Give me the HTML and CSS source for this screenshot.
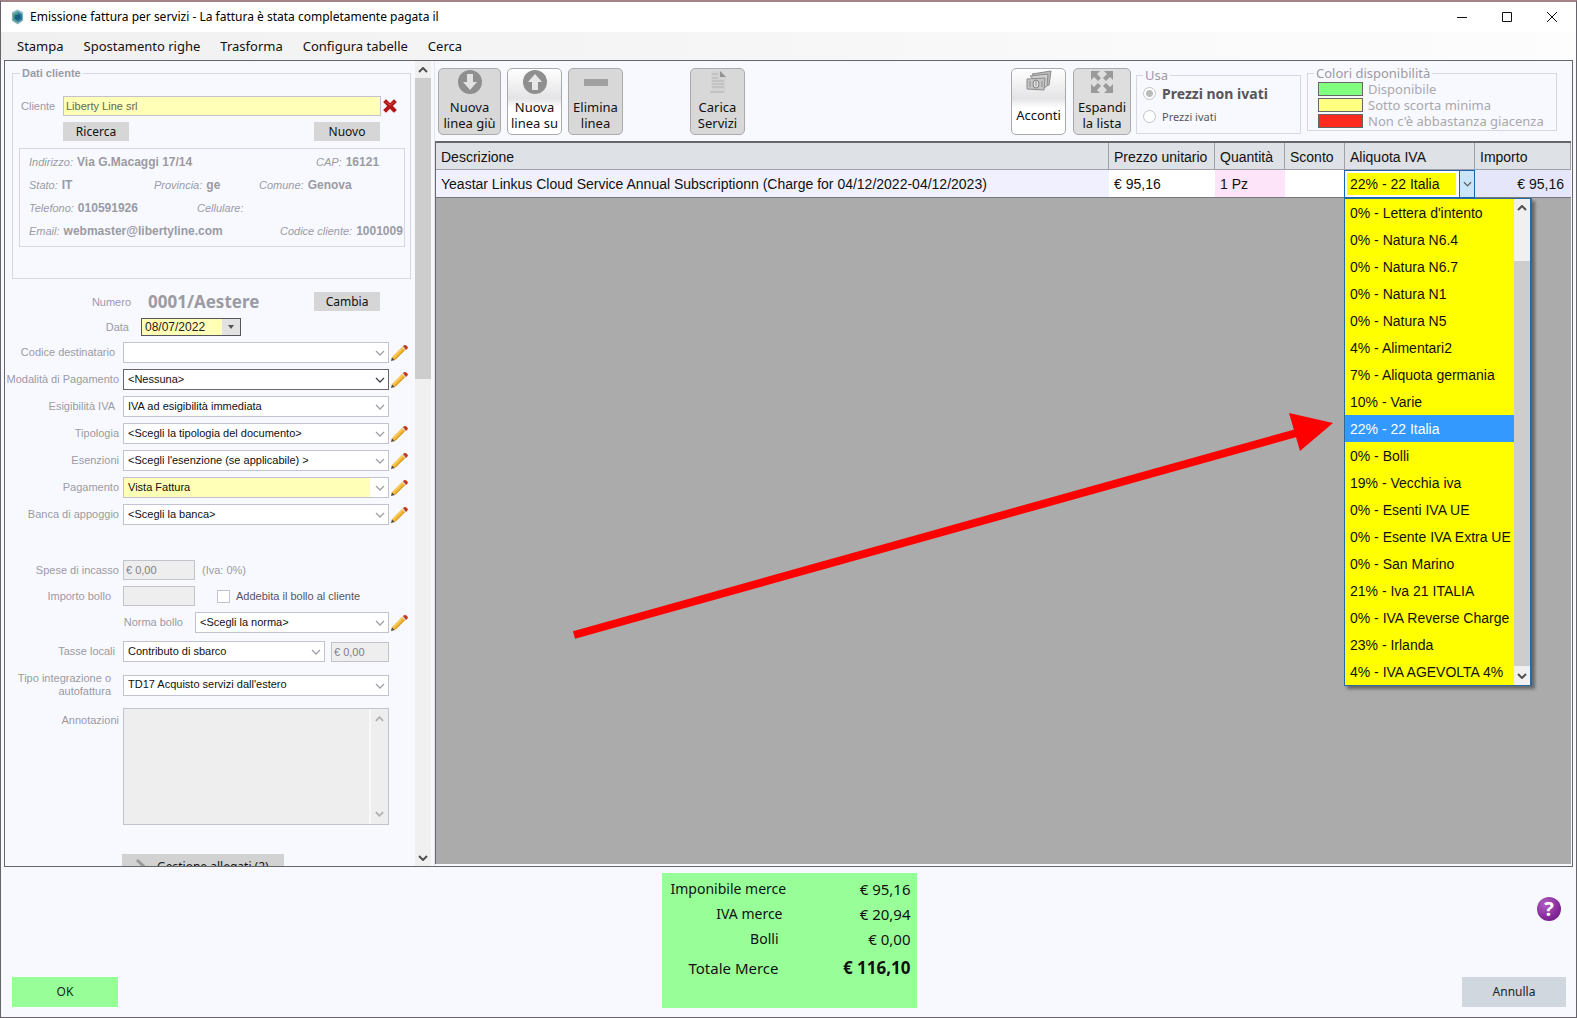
FILE: index.html
```html
<!DOCTYPE html>
<html lang="it">
<head>
<meta charset="utf-8">
<title>Emissione fattura per servizi</title>
<link rel="stylesheet" href="styles.css">
</head>
<body>
<svg class="defs" aria-hidden="true">
  <symbol id="pencil" viewBox="0 0 17 17">
    <path d="M0 17l1-4 3 3z" fill="#5a4a3a"/>
    <path d="M1 13L11 3l3 3L4 16z" fill="#f2b632"/>
    <path d="M2 13.500l10-10" stroke="#ffe07a" stroke-width="1"/>
    <path d="M4 15.500l10-10" stroke="#c98a1c" stroke-width="1"/>
    <path d="M11 3l1-1 3 3-1 1z" fill="#d9d2c8"/>
    <path d="M12 2q2-2 4 0t-1 4z" fill="#c03a1e"/>
  </symbol>
  <symbol id="up" viewBox="0 0 10 6"><path d="M1 5l4-4 4 4" fill="none" stroke="currentColor" stroke-width="2"/></symbol>
  <symbol id="down" viewBox="0 0 10 6"><path d="M1 1l4 4 4-4" fill="none" stroke="currentColor" stroke-width="2"/></symbol>
  <symbol id="chevron" viewBox="0 0 10 6"><path d="M1 1l4 4 4-4" fill="none" stroke="currentColor" stroke-width="1.300"/></symbol>
</svg>
<div class="window">
  <header class="titlebar">
    <svg class="app-icon" viewBox="0 0 16 16" aria-hidden="true"><path d="M8 0l6 3v9l-6 4-6-4V3z" fill="#8fb7c4"/><path d="M8 2l5 3v6l-5 3z" fill="#2f7f9a"/><path d="M8 2L3 5v6l5 3z" fill="#4a9a8a"/><path d="M5 6l5-1 2 4-4 3-3-2z" fill="#1c5f86"/></svg>
    <h1>Emissione fattura per servizi - La fattura è stata completamente pagata il</h1>
    <div class="controls">
      <button aria-label="Riduci"><svg viewBox="0 0 12 12"><path d="M1 6.500h10"/></svg></button>
      <button aria-label="Ingrandisci"><svg viewBox="0 0 12 12"><path d="M1.500 1.500h9v9h-9z"/></svg></button>
      <button aria-label="Chiudi"><svg viewBox="0 0 12 12"><path d="M1 1l10 10M11 1L1 11"/></svg></button>
    </div>
  </header>
  <nav class="menu">
    <a href="#">Stampa</a><a href="#">Spostamento righe</a><a href="#">Trasforma</a><a href="#">Configura tabelle</a><a href="#">Cerca</a>
  </nav>

  <main class="frame">
    <aside class="side">
      <form class="form">
        <fieldset class="customer">
          <legend>Dati cliente</legend>
          <div class="client-row">
            <label for="cliente">Cliente</label>
            <input id="cliente" class="box yellow" value="Liberty Line srl">
            <button type="button" class="clear" aria-label="Rimuovi cliente"><svg viewBox="0 0 14 14"><path d="M3 3l8 8M11 3l-8 8" stroke="#b01818" stroke-width="4" stroke-linecap="square"/><path d="M3 3l4 3 4-3" stroke="#e04848" stroke-width="1" fill="none"/></svg></button>
          </div>
          <div class="client-buttons"><button type="button" class="small">Ricerca</button><button type="button" class="small">Nuovo</button></div>
          <div class="details">
            <div class="d1"><span><i>Indirizzo:</i><b>Via G.Macaggi 17/14</b></span><span><i>CAP:</i><b>16121</b></span></div>
            <div class="d2"><span><i>Stato:</i><b>IT</b></span><span><i>Provincia:</i><b>ge</b></span><span><i>Comune:</i><b>Genova</b></span></div>
            <div class="d3"><span><i>Telefono:</i><b>010591926</b></span><span><i>Cellulare:</i></span></div>
            <div class="d4"><span><i>Email:</i><b>webmaster@libertyline.com</b></span><span><i>Codice cliente:</i><b>1001009</b></span></div>
          </div>
        </fieldset>

        <div class="number-row"><span class="caption">Numero</span><strong>0001/Aestere</strong><button type="button" class="small">Cambia</button></div>
        <div class="date-row"><label class="caption" for="data">Data</label><div class="date"><input id="data" value="08/07/2022"><button type="button" aria-label="Apri calendario"><svg viewBox="0 0 6 4"><path d="M0 0h6L3 4z"/></svg></button></div></div>

        <div class="rows">
          <div class="row"><label class="in" for="f1">Codice destinatario</label><div class="combo"><select id="f1"><option></option></select><svg><use href="#chevron"/></svg></div><button type="button" class="edit" aria-label="Modifica"><svg><use href="#pencil"/></svg></button></div>
          <div class="row"><label for="f2">Modalità di Pagamento</label><div class="combo active"><select id="f2"><option>&lt;Nessuna&gt;</option></select><svg><use href="#chevron"/></svg></div><button type="button" class="edit" aria-label="Modifica"><svg><use href="#pencil"/></svg></button></div>
          <div class="row"><label class="in" for="f3">Esigibilità IVA</label><div class="combo"><select id="f3"><option>IVA ad esigibilità immediata</option></select><svg><use href="#chevron"/></svg></div></div>
          <div class="row"><label for="f4">Tipologia</label><div class="combo"><select id="f4"><option>&lt;Scegli la tipologia del documento&gt;</option></select><svg><use href="#chevron"/></svg></div><button type="button" class="edit" aria-label="Modifica"><svg><use href="#pencil"/></svg></button></div>
          <div class="row"><label for="f5">Esenzioni</label><div class="combo"><select id="f5"><option>&lt;Scegli l'esenzione (se applicabile) &gt;</option></select><svg><use href="#chevron"/></svg></div><button type="button" class="edit" aria-label="Modifica"><svg><use href="#pencil"/></svg></button></div>
          <div class="row"><label for="f6">Pagamento</label><div class="combo fill"><select id="f6"><option>Vista Fattura</option></select><svg><use href="#chevron"/></svg></div><button type="button" class="edit" aria-label="Modifica"><svg><use href="#pencil"/></svg></button></div>
          <div class="row"><label for="f7">Banca di appoggio</label><div class="combo"><select id="f7"><option>&lt;Scegli la banca&gt;</option></select><svg><use href="#chevron"/></svg></div><button type="button" class="edit" aria-label="Modifica"><svg><use href="#pencil"/></svg></button></div>
        </div>

        <div class="rows extra">
          <div class="row"><label for="f8">Spese di incasso</label><div class="pair"><input id="f8" class="box money" value="€ 0,00" readonly><span class="caption">(Iva: 0%)</span></div></div>
          <div class="row"><label class="in2" for="f9">Importo bollo</label><div class="pair"><input id="f9" class="box money" readonly><label class="tick"><input type="checkbox"><span>Addebita il bollo al cliente</span></label></div></div>
          <div class="row norm"><label class="in2" for="f10">Norma bollo</label><div class="combo"><select id="f10"><option>&lt;Scegli la norma&gt;</option></select><svg><use href="#chevron"/></svg></div><button type="button" class="edit" aria-label="Modifica"><svg><use href="#pencil"/></svg></button></div>
        </div>
        <div class="rows last">
          <div class="row"><label class="in" for="f11">Tasse locali</label><div class="pair tax"><div class="combo"><select id="f11"><option>Contributo di sbarco</option></select><svg><use href="#chevron"/></svg></div><input class="box" value="€ 0,00" readonly aria-label="Importo tasse locali"></div></div>
          <div class="row"><label class="in2" for="f12">Tipo integrazione o autofattura</label><div class="combo"><select id="f12"><option>TD17 Acquisto servizi dall'estero</option></select><svg><use href="#chevron"/></svg></div></div>
          <div class="row notes"><label for="f13">Annotazioni</label><div class="notes-box"><textarea id="f13" readonly></textarea><div class="notes-scroll"><svg><use href="#up"/></svg><svg><use href="#down"/></svg></div></div></div>
        </div>
        <button type="button" class="attach"><svg viewBox="0 0 18 18"><path d="M1 2l15 14" stroke="#999" stroke-width="3"/></svg>Gestione allegati (2)</button>
      </form>
      <div class="scroll"><svg><use href="#up"/></svg><div class="thumb"></div><svg><use href="#down"/></svg></div>
    </aside>

    <section class="work">
      <div class="toolbar">
        <button class="tool wide"><svg viewBox="0 0 26 26"><circle cx="13" cy="13" r="12" fill="#8f8f8f"/><path d="M10 5h6v8h4l-7 8-7-8h4z" fill="#e2e2e2"/></svg><span>Nuova<br>linea giù</span></button>
        <button class="tool light"><svg viewBox="0 0 26 26"><circle cx="13" cy="13" r="12" fill="#8f8f8f"/><path d="M10 21h6v-8h4l-7-8-7 8h4z" fill="#e8e8e8"/></svg><span>Nuova<br>linea su</span></button>
        <button class="tool"><svg viewBox="0 0 26 26"><path d="M1 10h24v7H1z" fill="#a0a0a0"/></svg><span>Elimina<br>linea</span></button>
        <button class="tool load"><svg viewBox="0 0 26 26"><path d="M6 2h10l5 5v17H6z" fill="#d3d3d3"/><path d="M15 2l6 6h-6z" fill="#929292"/><path d="M7 5h6M7 9h6M7 12h12M7 15h12M7 18h12M5 23h14" stroke="#b2b2b2"/></svg><span>Carica<br>Servizi</span></button>
        <button class="tool light credit"><svg viewBox="0 0 26 26"><path d="M6 5l19-3-2 14-4 1z" fill="#bbb" stroke="#8c8c8c"/><path d="M4 7l18-2-1 12-3 2z" fill="#d0d0d0" stroke="#8c8c8c"/><path d="M1 10l18-1-1 12-17-1z" fill="#c4c4c4" stroke="#8c8c8c"/><ellipse cx="10" cy="15" rx="3" ry="4" fill="#e4e4e4" stroke="#808080"/><path d="M4 12v6M16 12v6M10 12v5" stroke="#8c8c8c"/></svg><span>Acconti</span></button>
        <button class="tool expand"><svg viewBox="0 0 26 26" fill="#9a9a9a"><path id="corner" d="M2 2h9L8 5l4 4-3 3-4-4-3 3z"/><use href="#corner" transform="rotate(90 13 13)"/><use href="#corner" transform="rotate(180 13 13)"/><use href="#corner" transform="rotate(270 13 13)"/></svg><span>Espandi<br>la lista</span></button>
        <fieldset class="usage"><legend>Usa</legend>
          <label class="main"><input type="radio" name="usa" checked><span>Prezzi non ivati</span></label>
          <label><input type="radio" name="usa"><span>Prezzi ivati</span></label>
        </fieldset>
        <fieldset class="stock"><legend>Colori disponibilità</legend>
          <div><i class="green"></i>Disponibile</div><div><i class="pale"></i>Sotto scorta minima</div><div><i class="red"></i>Non c'è abbastanza giacenza</div>
        </fieldset>
      </div>
      <div class="grid">
        <table>
          <colgroup><col><col class="c2"><col class="c3"><col class="c4"><col class="c5"><col class="c6"></colgroup>
          <thead><tr><th>Descrizione</th><th>Prezzo unitario</th><th>Quantità</th><th>Sconto</th><th>Aliquota IVA</th><th>Importo</th></tr></thead>
          <tbody><tr><td class="lilac">Yeastar Linkus Cloud Service Annual Subscriptionn (Charge for 04/12/2022-04/12/2023)</td><td>€ 95,16</td><td class="pink">1 Pz</td><td></td>
            <td class="vat"><div class="vat-combo"><select aria-label="Aliquota IVA"><option>22% - 22 Italia</option></select><span><svg><use href="#chevron"/></svg></span></div>
              <div class="popup"><ul role="listbox" aria-label="Aliquote"><li role="option">0% - Lettera d'intento</li><li role="option">0% - Natura N6.4</li><li role="option">0% - Natura N6.7</li><li role="option">0% - Natura N1</li><li role="option">0% - Natura N5</li><li role="option">4% - Alimentari2</li><li role="option">7% - Aliquota germania</li><li role="option">10% - Varie</li><li role="option" aria-selected="true" class="sel">22% - 22 Italia</li><li role="option">0% - Bolli</li><li role="option">19% - Vecchia iva</li><li role="option">0% - Esenti IVA UE</li><li role="option">0% - Esente IVA Extra UE</li><li role="option">0% - San Marino</li><li role="option">21% - Iva 21 ITALIA</li><li role="option">0% - IVA Reverse Charge</li><li role="option">23% - Irlanda</li><li role="option">4% - IVA AGEVOLTA 4%</li></ul>
              <div class="scroll"><svg><use href="#up"/></svg><div class="thumb"></div><svg><use href="#down"/></svg></div></div>
            </td><td class="amount">€ 95,16</td></tr></tbody>
        </table>
        <svg class="arrow" viewBox="0 0 770 240" aria-hidden="true"><path d="M4 222L730 19" stroke="#f00" stroke-width="8"/><path d="M719 0l44 10-33 28z" fill="#f00"/></svg>
      </div>
    </section>
  </main>

  <footer class="footer">
    <button class="ok">OK</button>
    <dl class="totals"><div><dt>Imponibile merce</dt><dd>€ 95,16</dd></div><div><dt>IVA merce</dt><dd>€ 20,94</dd></div><div><dt class="in">Bolli</dt><dd>€ 0,00</dd></div><div class="sum"><dt class="in">Totale Merce</dt><dd>€ 116,10</dd></div></dl>
    <div class="end"><button class="help" aria-label="Aiuto">?</button><button class="cancel">Annulla</button></div>
  </footer>
</div>
</body>
</html>
```
FILE: styles.css
```css
* { box-sizing: border-box; }
body { margin: 0; font: 11px/14px "Liberation Sans", Arial, sans-serif; color: #111; }
button, input, select, textarea { font: inherit; color: inherit; margin: 0; padding: 0; border: 0; background: none; border-radius: 0; outline: 0; }
h1, dl, dd, ul { margin: 0; padding: 0; }
fieldset { margin: 0; padding: 0; min-width: 0; border: 1px solid #d5d8e4; }
svg { display: block; }
.defs { position: absolute; width: 0; height: 0; }

.window { display: flex; flex-direction: column; height: 100vh; min-height: 900px; background: #f8f9ff; border: 1px solid #66636b; border-top: 2px solid #a28488; }
.titlebar { display: flex; align-items: center; height: 30px; padding: 0 2px 0 9px; background: #fff; flex: none; }
.app-icon { width: 15px; height: 16px; margin-right: 5px; }
h1 { font: 12px/16px "Noto Sans", "Open Sans", sans-serif; color: #000; }
.controls { display: flex; margin-left: auto; }
.controls button { width: 45px; height: 28px; display: grid; place-items: center; }
.controls svg { width: 12px; height: 12px; fill: none; stroke: #111; }
.menu { display: flex; align-items: center; gap: 20px; height: 28px; flex: none; padding-left: 16px; background: linear-gradient(90deg, #f0f0f0, #fdfdfd); font: 13px/18px "Noto Sans", sans-serif; }
.menu a { color: #111; text-decoration: none; }

.frame { display: flex; flex: 1; min-height: 0; margin: 0 3px; border: 1px solid #66666e; }
.side { display: flex; width: 429px; flex: none; overflow: hidden; }
.form { width: 410px; color: #9b9ba3; overflow: hidden; }
.scroll { display: flex; flex-direction: column; align-items: center; width: 16px; background: #f0f0f0; color: #505050; }
.side .scroll { padding: 6px 0 5px; }
.scroll svg { width: 10px; height: 6px; flex: none; }
.side .thumb { width: 16px; height: 301px; margin: 5px 0 auto; background: #cdcdcd; }

.customer { width: 399px; height: 212px; margin: 6px 0 0 7px; padding: 0 0 0 6px; }
legend { margin-left: 1px; padding: 0 2px; font-weight: bold; line-height: 13px; }
.box { height: 20px; padding: 0 2px; border: 1px solid #c3c3cc; background: #eee; color: #808088; }
.yellow { background: #ffffb8; color: #66665a; }
.client-row { display: grid; grid-template-columns: 42px 318px 20px; align-items: center; margin: 16px 0 6px 2px; }
.clear { width: 14px; height: 14px; margin-left: 2px; }
.small { width: 66px; height: 19px; background: #d6d6d6; color: #111; font: 12px/16px "Noto Sans", sans-serif; }
.client-buttons { display: flex; justify-content: space-between; width: 317px; margin-left: 44px; }
.details { width: 386px; height: 99px; margin-top: 7px; padding: 6px 0 0 9px; border: 1px solid #d5d8e4; overflow: hidden; white-space: nowrap; }
.details > div { display: grid; height: 23px; }
.details span { display: flex; gap: 4px; }
.details b { font-size: 12px; }
.d1 { grid-template-columns: 287px 1fr; }
.d2 { grid-template-columns: 125px 105px 1fr; }
.d3 { grid-template-columns: 168px 1fr; }
.d4 { grid-template-columns: 251px 1fr; }

.caption { color: #9b9ba3; }
.number-row { display: grid; grid-template-columns: 126px 165px 18px 66px; align-items: center; margin-top: 10px; height: 25px; }
.number-row strong { padding-left: 17px; font: bold 17px/22px "Noto Sans", sans-serif; }
.number-row .small { grid-column: 4; }
.number-row .caption, .date-row .caption { text-align: right; }
.date-row { display: grid; grid-template-columns: 124px 100px; column-gap: 12px; align-items: center; height: 18px; margin-top: 4px; }
.date { display: flex; height: 18px; border: 1px solid #55555c; background: #ffffb8; color: #222; font-size: 12px; }
.date input { flex: 1; min-width: 0; padding-left: 3px; }
.date button { width: 18px; display: grid; place-items: center; background: #e2e2e2; }
.date svg { width: 6px; height: 4px; fill: #555; }

.rows { display: flex; flex-direction: column; gap: 6px; margin-top: 6px; }
.row { display: grid; grid-template-columns: 116px 266px 20px; column-gap: 2px; align-items: center; min-height: 21px; }
.row > label { padding-right: 2px; text-align: right; line-height: 13px; }
.row > .in { padding-right: 6px; }
.row > .in2 { padding-right: 10px; }
.combo { position: relative; height: 21px; border: 1px solid #c3c3cf; background: #fff; }
.combo select { display: block; width: 100%; height: 17px; padding: 0 28px 0 4px; appearance: none; color: #111; opacity: 1; }
.combo svg { position: absolute; right: 3px; top: 7px; width: 10px; height: 6px; color: #a0a0a8; pointer-events: none; }
.combo.active { border-color: #66666e; }
.combo.active svg { color: #44444c; }
.combo.fill { background: linear-gradient(90deg, #ffffb8 246px, #fff 246px); }
.edit { width: 17px; height: 17px; }
.edit svg { width: 17px; height: 17px; }
.extra { margin-top: 35px; }
.extra .row { min-height: 20px; }
.pair { display: flex; align-items: center; gap: 7px; }
.money { width: 72px; }
.tick { display: flex; align-items: center; gap: 6px; margin-left: 15px; color: #55555c; }
.tick input { appearance: none; width: 13px; height: 13px; border: 1px solid #c3c3cf; background: #fff; }
.extra .norm { grid-template-columns: 188px 194px 20px; }
.last { margin-top: 8px; gap: 10px; }
.tax { gap: 6px; }
.tax .combo { width: 202px; }
.tax .box { width: 58px; }
.notes { align-items: start; }
.notes > label { padding-top: 6px; }
.notes-box { display: flex; height: 117px; border: 1px solid #c3c3cf; background: #eee; }
.notes textarea { flex: 1; min-width: 0; resize: none; }
.notes-scroll { display: flex; flex-direction: column; justify-content: space-between; align-items: center; width: 19px; padding: 7px 0; border-left: 2px solid #f8f8f8; color: #b0b0b0; }
.notes-scroll svg { width: 9px; height: 6px; }
.attach { display: flex; align-items: center; width: 162px; height: 25px; margin: 29px 0 0 117px; padding-left: 14px; gap: 3px; background: #d2d2d2; color: #111; font: 12px/16px "Noto Sans", sans-serif; }
.attach svg { width: 18px; height: 18px; }

.work { flex: 1; min-width: 0; display: flex; flex-direction: column; border-left: 1px solid #e4e4ea; padding-right: 1px; }
.toolbar { display: flex; height: 80px; padding: 7px 14px 0 3px; flex: none; }
.tool { display: flex; flex-direction: column; align-items: center; justify-content: space-between; width: 55px; height: 67px; margin-right: 6px; padding: 0 0 3px; border: 1px solid #aaa; border-radius: 5px; background: #d8d8d8; font: 13px/16px "Noto Sans", sans-serif; color: #111; white-space: nowrap; flex: none; }
.tool svg { width: 26px; height: 26px; }
.wide { width: 63px; }
.light { background: linear-gradient(#fff, #e4e4e6 45%, #fff 60%); }
.load { margin-left: 61px; }
.credit { margin-left: auto; margin-right: 7px; padding-bottom: 11px; }
.expand { width: 58px; margin-right: 5px; background: #dedede; }
.usage { width: 165px; height: 66px; margin-right: 6px; color: #55555c; font: 11px/14px "Noto Sans", sans-serif; }
.usage legend, .stock legend { margin-left: 6px; font: 13px/14px "Noto Sans", sans-serif; color: #9b9ba3; }
.usage label { display: flex; align-items: center; gap: 6px; margin-left: 6px; height: 23px; }
.usage .main { font-weight: bold; font-size: 14px; }
.usage input { appearance: none; width: 13px; height: 13px; border: 1px solid #c4c4c8; border-radius: 50%; background: #fff; }
.usage input:checked { background: radial-gradient(circle, #bbb 3px, #fff 4px); }
.stock { width: 250px; height: 66px; margin-top: -3px; color: #a8a8ae; font: 13px/16px "Noto Sans", sans-serif; white-space: nowrap; }
.stock legend { line-height: 16px; }
.stock div { display: flex; align-items: center; gap: 5px; height: 16px; padding-left: 10px; }
.stock i { width: 45px; height: 14px; border: 1px solid #666; }
.green { background: #80ff80; }
.pale { background: #ffff80; }
.red { background: #ff2a20; }

.grid { position: relative; flex: 1; min-height: 0; border: 1px solid #66666e; border-width: 2px 0 0 1px; background: #ababab; margin: 0 0 2px 0; }
table { width: 100%; border-collapse: separate; border-spacing: 0; table-layout: fixed; font-size: 14px; line-height: 16px; }
.c2 { width: 106px; } .c3 { width: 70px; } .c4 { width: 60px; } .c5 { width: 130px; } .c6 { width: 96px; }
th { height: 27px; padding: 2px 4px 0 5px; background: #dee1e6; border-right: 1px solid #a0a0a6; border-bottom: 1px solid #a0a0a6; font-weight: normal; text-align: left; white-space: nowrap; }
td { height: 28px; padding: 0 4px 0 5px; background: #fff; border-bottom: 1px solid #77777e; white-space: nowrap; }
.lilac { background: #f0f0ff; }
.pink { background: #fde4f8; }
.amount { background: #e6e6fa; text-align: right; padding-right: 7px; }
.vat { position: relative; padding: 0; }
.vat-combo { display: flex; height: 28px; margin: -1px 0 -1px -1px; border: 1px solid #1a66ac; background: #fff; }
.vat-combo select { flex: 1; min-width: 0; margin: 2px 3px 2px 2px; padding-left: 3px; appearance: none; background: #ff0; }
.vat-combo span { width: 15px; display: grid; place-items: center; border-left: 1px solid #1a66ac; background: #cce4f7; color: #555; }
.vat-combo svg { width: 9px; height: 6px; }
.popup { position: absolute; z-index: 3; top: 28px; left: -1px; width: 188px; display: flex; border: 1px solid #2a6a9c; border-right-width: 2px; background: #ff0; box-shadow: 3px 3px 3px #0006; }
.popup ul { flex: 1; list-style: none; }
.popup li { height: 27px; padding-left: 5px; line-height: 28px; }
.popup .sel { background: #3399ff; color: #fff; }
.popup .scroll { padding: 6px 0; }
.popup .scroll svg:last-child { margin-top: auto; }
.popup .thumb { width: 16px; flex: 1; margin: 50px 0 7px; background: #cdcdcd; }
.arrow { position: absolute; left: 134px; top: 270px; width: 770px; height: 240px; }

.footer { display: grid; grid-template-columns: 1fr 255px 1fr; height: 150px; flex: none; padding: 6px 10px 9px 11px; font: 12px/16px "Noto Sans", sans-serif; }
.ok, .cancel { width: 106px; height: 30px; margin-bottom: 1px; background: #98ff98; align-self: end; color: #222; }
.totals { display: flex; flex-direction: column; padding: 4px 6px 0 9px; background: #98ff98; font: 15px/24px "Noto Sans", sans-serif; }
.totals div { display: grid; grid-template-columns: 112px 1fr; height: 25px; text-align: right; white-space: nowrap; }
.totals dt { font-size: 14px; }
.totals .in { padding-right: 4px; }
.totals .sum { margin-top: 4px; }
.sum dt { font-size: 15px; }
.sum dd { font-weight: bold; font-size: 17px; }
.end { display: flex; flex-direction: column; justify-content: space-between; align-items: flex-end; }
.cancel { width: 104px; background: #d0d7de; }
.help { width: 24px; height: 24px; margin: 24px 5px 0 0; border-radius: 50%; background: radial-gradient(circle at 35% 30%, #b060c0, #7d2094 70%); color: #fff; font: bold 20px/24px "Noto Sans", sans-serif; }
```
